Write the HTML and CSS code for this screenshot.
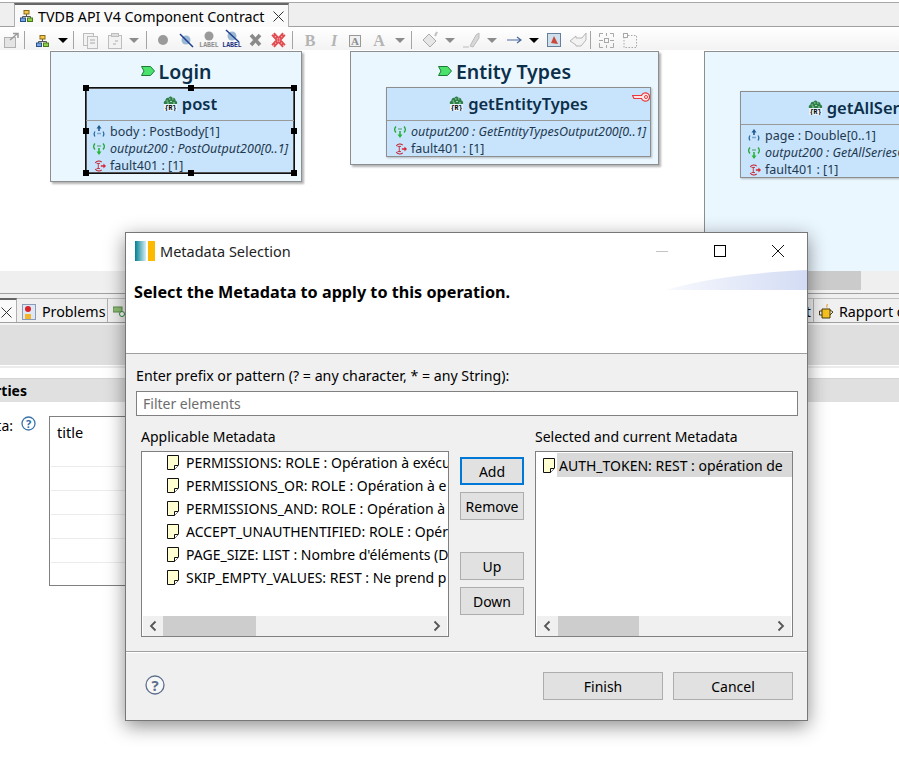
FILE: index.html
```html
<!DOCTYPE html>
<html lang="en">
<head>
  <meta charset="UTF-8" />
  <title>TVDB API V4 Component Contract</title>
  <link rel="stylesheet" href="styles.css">
</head>
<body>

  <svg class="defs" width="0" height="0">
    <defs>
      <linearGradient id="swoosh" x1="0" x2="1" y1="0" y2="0">
        <stop offset="0" stop-color="#f8f9fe"/>
        <stop offset="1" stop-color="#d3dcf4"/>
      </linearGradient>
    </defs>
    <symbol id="tag" viewBox="0 0 14 10">
      <path d="M.5.5H9.500L13.500 5 9.500 9.500H.5L3 5Z" fill="#4be26c" stroke="#1c7a36"/>
    </symbol>
    <symbol id="op" viewBox="0 0 15 15">
      <path d="M1.500 8.500C0 7 1 5 2.500 4.500 2.500 2.500 4 1.500 5.500 2 6.500 0 8.500 0 9.500 2 11 1.500 12.500 2.500 12.500 4.500 14 5 15 7 13.500 8.500Z" fill="#2f7f48"/>
      <path d="M3.500 5H5M6 3H7.500M9 3H10.500M4 7H6M7 5.500H9M10 7H12" stroke="#a4d6ae"/>
      <rect x="1" y="8" width="13" height="7" fill="#e6f3fb"/>
      <text x="7.500" y="14" class="op-r">{R}</text>
    </symbol>
    <symbol id="p-in" viewBox="0 0 12 13">
      <path d="M2 6.500A4.500 4.500 0 0 0 2 11.500M10 6.500A4.500 4.500 0 0 1 10 11.500" fill="none" stroke="#2b6ca3" stroke-width="1.300"/>
      <path d="M6 0L8.500 3.500H6.800V6H5.200V3.500H3.500Z" fill="#1f5a8e"/>
      <path d="M4.500 8.500H5.500M6.500 8.500H7.500" stroke="#2b6ca3" stroke-width="1.500"/>
    </symbol>
    <symbol id="p-out" viewBox="0 0 12 13">
      <path d="M2 1.500A4.500 4.500 0 0 0 2 7.500M10 1.500A4.500 4.500 0 0 1 10 7.500" fill="none" stroke="#27a838" stroke-width="1.300"/>
      <path d="M5.200 6H6.800V9.500H8.500L6 13 3.500 9.500H5.200Z" fill="#27b53a"/>
      <path d="M4.500 4H5.500M6.500 4H7.500" stroke="#1f8a30" stroke-width="1.500"/>
    </symbol>
    <symbol id="p-fault" viewBox="0 0 14 13">
      <path d="M1.500 3A4.800 4.800 0 0 1 9 2M1.500 10A4.800 4.800 0 0 0 9 11" fill="none" stroke="#c4202c" stroke-width="1.300"/>
      <path d="M3 3.500H7M3 9.500H7M5 3.500V9.500" stroke="#c4202c"/>
      <path d="M8 5.500H11V3.500L14 6.500 11 9.500V7.500H8Z" fill="#d8242f"/>
    </symbol>
    <symbol id="note" viewBox="0 0 12 15">
      <path d="M.5.5H11.500V10L7.500 14.500H.5Z" fill="#ffffd2" stroke="#111"/>
      <path d="M7.500 14.500V10.500H11" fill="#fff" stroke="#111"/>
    </symbol>
    <symbol id="sb-left" viewBox="0 0 8 12">
      <path d="M6.500 1.500L2 6 6.500 10.500" fill="none" stroke="#555" stroke-width="1.800"/>
    </symbol>
    <symbol id="sb-right" viewBox="0 0 8 12">
      <path d="M1.500 1.500L6 6 1.500 10.500" fill="none" stroke="#555" stroke-width="1.800"/>
    </symbol>
    <symbol id="tree" viewBox="0 0 13 12">
      <path d="M6.500 4V7M2.500 8V6.500H10.500V8" fill="none" stroke="#555"/>
      <rect x="4" y=".5" width="5" height="3.500" fill="#f5c64a" stroke="#8a6a14"/>
      <rect x=".5" y="8" width="5" height="3.500" fill="#7aa5dc" stroke="#28508c"/>
      <rect x="7.500" y="8" width="5" height="3.500" fill="#8ed04a" stroke="#4a7a18"/>
    </symbol>
  </svg>

  <div class="app">

    <div class="editor-tabs">
      <div class="editor-tab">
        <svg class="tab-icon" width="13" height="12"><use href="#tree"/></svg>
        <span>TVDB API V4 Component Contract</span>
        <svg class="tab-close" width="11" height="11" viewBox="0 0 11 11"><path d="M.5.5L10.500 10.500M10.500.5L.5 10.500" stroke="#333"/></svg>
      </div>
    </div>

    <div class="toolbar">
      <svg width="24" height="23" viewBox="0 0 24 23">
        <rect x="4.500" y="10.500" width="11" height="10" fill="#e4e4e4" stroke="#b0b0b0"/>
        <path d="M10 13L17 7M13 6.500H18V11" fill="none" stroke="#9a9a9a" stroke-width="1.500"/>
      </svg>
      <div class="tb-sep"></div>
      <svg width="48" height="23" viewBox="0 0 48 23">
        <use href="#tree" x="11" y="8" width="13" height="12"/>
        <path d="M33 11H43L38 16Z" fill="#000"/>
      </svg>
      <div class="tb-sep"></div>
      <svg width="72" height="23" viewBox="0 0 72 23">
        <g fill="#f2f2f2" stroke="#bdbdbd">
          <rect x="9.500" y="6.500" width="10" height="12"/>
          <rect x="13.500" y="9.500" width="10" height="12"/>
          <rect x="34.500" y="8.500" width="13" height="13"/>
          <rect x="37.500" y="6.500" width="7" height="3" fill="#ddd"/>
        </g>
        <path d="M16 13H21M16 16H21M41 14H44M39 17H42" stroke="#aaa"/>
        <path d="M55 11H65L60 16Z" fill="#8c8c8c"/>
      </svg>
      <div class="tb-sep"></div>
      <svg width="145" height="23" viewBox="0 0 145 23">
        <circle cx="16" cy="13" r="5" fill="#9a9a9a"/>
        <circle cx="39" cy="13" r="4.500" fill="#9ab7d4"/>
        <path d="M33 7L46 20" stroke="#1d3f8f" stroke-width="1.500"/>
        <circle cx="62" cy="9" r="4.500" fill="#9a9a9a"/>
        <text x="62" y="20" class="tb-label">LABEL</text>
        <circle cx="85" cy="9" r="4.500" fill="#9ab7d4"/>
        <path d="M79 3L92 15" stroke="#1d3f8f" stroke-width="1.500"/>
        <text x="85" y="20" class="tb-label dark">LABEL</text>
        <path d="M104 8L113 18M113 8L104 18" stroke="#8a8a8a" stroke-width="3.600"/>
        <path d="M126 7L137 19M137 7L126 19" stroke="#e04a50" stroke-width="4.400"/>
        <path d="M126 7L137 19M137 7L126 19" stroke="#f7b2b4" stroke-width="1.500" stroke-dasharray="1 2"/>
      </svg>
      <div class="tb-sep"></div>
      <svg width="118" height="23" viewBox="0 0 118 23">
        <text x="17" y="19" class="tb-b">B</text>
        <text x="41" y="19" class="tb-i">I</text>
        <rect x="56.500" y="8.500" width="11" height="11" fill="#f1f1f1" stroke="#999"/>
        <text x="62" y="18" class="tb-a small">A</text>
        <text x="86" y="19" class="tb-a">A</text>
        <path d="M102 11H112L107 16Z" fill="#8c8c8c"/>
      </svg>
      <div class="tb-sep"></div>
      <svg width="178" height="23" viewBox="0 0 178 23">
        <path d="M11 13L17 7 24 14 18 20Z" fill="#e6e6e6" stroke="#aaa"/>
        <path d="M23 9L25 5" stroke="#c0c0c0" stroke-width="2"/>
        <path d="M33 11H43L38 16Z" fill="#8c8c8c"/>
        <path d="M51 20H57M58 19L64 8 67 6 67 11 61 20Z" fill="#d8d8d8" stroke="#bcbcbc"/>
        <path d="M75 11H85L80 16Z" fill="#8c8c8c"/>
        <path d="M95 13H108M105 10L109 13 105 16" fill="none" stroke="#4a6a9e" stroke-width="1.200"/>
        <path d="M117 11H127L122 16Z" fill="#000"/>
        <rect x="135.500" y="6.500" width="13" height="13" fill="#cfe0ec" stroke="#667f9a"/>
        <path d="M139 16L142 9 146 17Z" fill="#c8483c"/>
        <path d="M158 14L164 9V11H170L174 6V13L169 19H164V18Z" fill="#f2f2f2" stroke="#b5b5b5"/>
      </svg>
      <div class="tb-sep"></div>
      <svg width="52" height="23" viewBox="0 0 52 23">
        <g fill="none" stroke="#a8a8a8">
          <path d="M8.500 10V6.500H12M19 6.500H22.500V10M8.500 16V20.500H12M19 20.500H22.500V16"/>
          <rect x="13.500" y="11.500" width="4" height="4"/>
          <path d="M15.500 6V9M15.500 18V21M8 13.500H12M19 13.500H23"/>
          <rect x="32.500" y="6.500" width="4" height="4"/>
          <path d="M37 8.500H45.500V20.500H33V11" stroke-dasharray="1.500 1.500"/>
        </g>
      </svg>
    </div>

    <div class="canvas">
      <div class="node node-login">
        <div class="node-title"><svg width="14" height="10"><use href="#tag"/></svg>Login</div>
        <div class="op op-post">
          <div class="op-title"><svg width="15" height="15"><use href="#op"/></svg>post</div>
          <div class="op-params">
            <div class="param"><svg width="12" height="13"><use href="#p-in"/></svg>body : PostBody[1]</div>
            <div class="param it"><svg width="12" height="13"><use href="#p-out"/></svg>output200 : PostOutput200[0..1]</div>
            <div class="param fault"><svg width="12" height="12"><use href="#p-fault"/></svg>fault401 : [1]</div>
          </div>
          <i class="handle h-tl"></i><i class="handle h-tc"></i><i class="handle h-tr"></i>
          <i class="handle h-ml"></i><i class="handle h-mr"></i>
          <i class="handle h-bl"></i><i class="handle h-bc"></i><i class="handle h-br"></i>
        </div>
      </div>

      <div class="node node-entity">
        <div class="node-title"><svg width="14" height="10"><use href="#tag"/></svg>Entity Types</div>
        <div class="op op-entity">
          <div class="op-title"><svg width="15" height="15"><use href="#op"/></svg>getEntityTypes</div>
          <svg class="key" width="18" height="10" viewBox="0 0 18 10">
            <path d="M.5 3.500H9.500A4.200 4.200 0 1 1 9.500 6.500H2Z" fill="#ffe5e5" stroke="#e8383c" stroke-width="1.200"/>
            <circle cx="14" cy="5" r="1.500" fill="#fff" stroke="#e8383c"/>
          </svg>
          <div class="op-params">
            <div class="param it"><svg width="12" height="13"><use href="#p-out"/></svg>output200 : GetEntityTypesOutput200[0..1]</div>
            <div class="param fault"><svg width="12" height="12"><use href="#p-fault"/></svg>fault401 : [1]</div>
          </div>
        </div>
      </div>

      <div class="node node-series">
        <div class="op op-series">
          <div class="op-title"><svg width="15" height="15"><use href="#op"/></svg>getAllSeries</div>
          <div class="op-params">
            <div class="param"><svg width="12" height="13"><use href="#p-in"/></svg>page : Double[0..1]</div>
            <div class="param it"><svg width="12" height="13"><use href="#p-out"/></svg>output200 : GetAllSeriesOutput200[0..1]</div>
            <div class="param fault"><svg width="12" height="12"><use href="#p-fault"/></svg>fault401 : [1]</div>
          </div>
        </div>
      </div>
    </div>

    <div class="canvas-scroll"><div class="canvas-track"></div></div>

    <div class="view-tabs">
      <div class="view-tab active">
        <svg width="11" height="11" viewBox="0 0 11 11"><path d="M.5.5L10.500 10.500M10.500.5L.5 10.500" stroke="#333"/></svg>
      </div>
      <div class="view-tab problems">
        <svg width="14" height="16" viewBox="0 0 14 16">
          <rect x=".5" y=".5" width="13" height="15" fill="#dfe7f2" stroke="#8a9cb8"/>
          <circle cx="6" cy="5" r="3" fill="#d8232a"/>
          <rect x="3" y="10" width="6" height="5" fill="#f3b52c"/>
        </svg>
        <span>Problems</span>
      </div>
      <div class="view-tab hidden-tab">
        <svg width="12" height="11" viewBox="0 0 12 11">
          <rect x="0" y="1" width="9" height="5" fill="#8fbf76" stroke="#5f8a4a"/>
          <circle cx="9" cy="8" r="2.500" fill="#fff" stroke="#2f8a3a"/>
        </svg>
      </div>
      <div class="view-spacer"></div>
      <div class="view-tab clipped"><span>t</span></div>
      <div class="view-tab rapport">
        <svg width="15" height="15" viewBox="0 0 15 15">
          <path d="M8 0C9 1 7 2 8 3.500" fill="none" stroke="#e08a1e"/>
          <path d="M3 5H11V14H3Z" fill="#f5c21f" stroke="#4a3a10"/>
          <path d="M3 7H.5V11H3M11 6L14 8 11 11" fill="none" stroke="#4a3a10"/>
        </svg>
        <span>Rapport de</span>
      </div>
    </div>

    <div class="props">
      <div class="props-band"></div>
      <div class="props-heading"><b>Properties</b></div>
      <div class="props-row">
        <div class="props-label"><span>Metadata:</span></div>
        <svg class="help-small" width="15" height="15" viewBox="0 0 15 15">
          <circle cx="7.500" cy="7.500" r="6.500" fill="#fff" stroke="#3a74a8" stroke-width="1.300"/>
          <text x="7.500" y="11.500" class="help-q">?</text>
        </svg>
        <div class="props-table">
          <div class="props-cell first">title</div>
          <div class="props-cell"></div>
          <div class="props-cell"></div>
          <div class="props-cell"></div>
          <div class="props-cell"></div>
          <div class="props-cell"></div>
        </div>
      </div>
    </div>
  </div>

  <div class="dialog">
    <div class="dlg-top">
      <div class="dlg-titlebar">
        <div class="dlg-logo"><i class="logo-teal"></i><i class="logo-yellow"></i></div>
        <span class="dlg-title">Metadata Selection</span>
        <div class="dlg-controls">
          <svg width="58" height="14" viewBox="0 0 58 14"><path d="M23 7.500H35" stroke="#c4c4c4"/></svg>
          <svg width="58" height="14" viewBox="0 0 58 14"><rect x="23.500" y="1.500" width="11" height="11" fill="none" stroke="#000"/></svg>
          <svg width="58" height="14" viewBox="0 0 58 14"><path d="M23 1L35 13M35 1L23 13" stroke="#111"/></svg>
        </div>
      </div>
      <div class="dlg-message">Select the Metadata to apply to this operation.</div>
      <svg class="dlg-swoosh" width="141" height="20" viewBox="0 0 141 20">
        <path d="M0 20C40 8 95 2 141 0V20Z" fill="url(#swoosh)"/>
      </svg>
    </div>

    <div class="dlg-body">
      <label class="filter-label">Enter prefix or pattern (? = any character, * = any String):</label>
      <input class="filter" type="text" placeholder="Filter elements" />

      <div class="panes">
        <div class="pane">
          <div class="pane-label">Applicable Metadata</div>
          <div class="list">
            <div class="list-items">
              <div class="item"><svg width="12" height="15"><use href="#note"/></svg>PERMISSIONS: ROLE : Opération à exécu</div>
              <div class="item"><svg width="12" height="15"><use href="#note"/></svg>PERMISSIONS_OR: ROLE : Opération à e</div>
              <div class="item"><svg width="12" height="15"><use href="#note"/></svg>PERMISSIONS_AND: ROLE : Opération à</div>
              <div class="item"><svg width="12" height="15"><use href="#note"/></svg>ACCEPT_UNAUTHENTIFIED: ROLE : Opér</div>
              <div class="item"><svg width="12" height="15"><use href="#note"/></svg>PAGE_SIZE: LIST : Nombre d'éléments (D</div>
              <div class="item"><svg width="12" height="15"><use href="#note"/></svg>SKIP_EMPTY_VALUES: REST : Ne prend p</div>
            </div>
            <div class="hscroll">
              <svg width="8" height="12"><use href="#sb-left"/></svg>
              <div class="thumb thumb-left"></div>
              <svg width="8" height="12"><use href="#sb-right"/></svg>
            </div>
          </div>
        </div>

        <div class="pane-buttons">
          <button class="btn focus">Add</button>
          <button class="btn">Remove</button>
          <button class="btn up">Up</button>
          <button class="btn">Down</button>
        </div>

        <div class="pane pane-right">
          <div class="pane-label">Selected and current Metadata</div>
          <div class="list">
            <div class="list-items">
              <div class="item selected"><svg width="12" height="15"><use href="#note"/></svg><span>AUTH_TOKEN: REST : opération de</span></div>
            </div>
            <div class="hscroll">
              <svg width="8" height="12"><use href="#sb-left"/></svg>
              <div class="thumb thumb-right"></div>
              <svg width="8" height="12"><use href="#sb-right"/></svg>
            </div>
          </div>
        </div>
      </div>
    </div>

    <div class="dlg-footer">
      <svg width="20" height="20" viewBox="0 0 20 20">
        <circle cx="10" cy="10" r="9" fill="#f7f7f7" stroke="#5d708c" stroke-width="1.300"/>
        <text x="10" y="15.500" class="help-q big">?</text>
      </svg>
      <div class="footer-buttons">
        <button class="btn wide">Finish</button>
        <button class="btn wide">Cancel</button>
      </div>
    </div>
  </div>

</body>
</html>
```

FILE: styles.css
```css
* {
  box-sizing: border-box;
}
html, body {
  margin: 0;
  height: 757px;
  overflow: hidden;
}
body {
  font-family: "Noto Sans", "Open Sans", sans-serif;
  font-size: 14px;
  color: #000;
  background: #fff;
  position: relative;
}
.defs {
  position: absolute;
}
svg {
  flex: none;
  display: block;
}
.app {
  display: flex;
  flex-direction: column;
  height: 757px;
}

/* editor tabs and toolbar */
.editor-tabs {
  flex: none;
  height: 25px;
  margin-top: 2px;
  padding-left: 14px;
  background: #efefef;
  border-top: 1px solid #a8a8a8;
  border-bottom: 1px solid #a0a0a0;
}
.editor-tab {
  width: 275px;
  height: 24px;
  display: flex;
  align-items: center;
  background: #fafafa;
  border: 1px solid #b0b0b0;
  border-top: 2px solid #666;
  border-bottom: 0;
  padding-left: 5px;
  font-size: 14.25px;
  white-space: nowrap;
}
.tab-icon {
  margin-right: 5px;
}
.tab-close {
  margin-left: 8px;
}
.toolbar {
  flex: none;
  height: 23px;
  display: flex;
  background: linear-gradient(#fff, #f3f3f3);
  overflow: hidden;
}
.tb-sep {
  flex: none;
  width: 1px;
  height: 18px;
  margin-top: 4px;
  background: #a4a4a4;
}
.tb-label {
  font: bold 6.5px "Liberation Mono", monospace;
  text-anchor: middle;
  fill: #8c8c8c;
}
.tb-label.dark {
  fill: #1d2f7f;
}
.tb-b, .tb-a, .tb-i {
  font-family: "Liberation Serif", serif;
  font-size: 16px;
  font-weight: bold;
  text-anchor: middle;
  fill: #b4b4b4;
}
.tb-i {
  font-style: italic;
}
.tb-a.small {
  font-size: 11px;
  fill: #8c8c8c;
}

/* diagram */
.canvas {
  flex: none;
  height: 221px;
  position: relative;
  overflow: hidden;
  background: #fff;
}
.node {
  position: absolute;
  top: 1px;
  background: #ebf7ff;
  border: 1px solid #8e8e8e;
  box-shadow: 2px 2px 2px rgba(0, 0, 0, 0.3);
}
.node-login {
  left: 50px;
  width: 252px;
  height: 131px;
  padding-left: 34px;
}
.node-entity {
  left: 350px;
  width: 309px;
  height: 114px;
  padding-left: 35px;
}
.node-series {
  left: 704px;
  width: 320px;
  height: 230px;
  padding: 39px 0 0 35px;
}
.node-title {
  height: 35px;
  display: flex;
  align-items: center;
  justify-content: center;
  gap: 4px;
  font-size: 19.5px;
  font-weight: 600;
  color: #0c2f4a;
  padding-top: 3px;
}
.node-login .node-title {
  margin-left: -34px;
  width: 250px;
}
.node-entity .node-title {
  margin-left: -35px;
  width: 307px;
}
.op {
  position: relative;
  background: #c8e4fc;
  border: 1px solid #8e8e8e;
  box-shadow: 1px 1px 2px rgba(0, 0, 0, 0.25);
}
.op-post {
  width: 210px;
  height: 87px;
  border: 1px solid #111;
  box-shadow: inset 0 0 0 1px #555;
}
.op-entity {
  width: 265px;
  height: 70px;
}
.op-series {
  width: 250px;
  height: 87px;
}
.op-title {
  height: 33px;
  display: flex;
  align-items: center;
  justify-content: center;
  gap: 4px;
  padding-bottom: 2px;
  font-size: 16.5px;
  font-weight: 600;
  color: #0c2f4a;
  border-bottom: 1px solid #9a9a9a;
}
.op-params {
  padding: 2px 0 0 7px;
}
.param {
  height: 17px;
  display: flex;
  align-items: center;
  gap: 5px;
  font-size: 12.5px;
  color: #1f3950;
  white-space: nowrap;
}
.param.it {
  font-style: italic;
}
.param.fault svg {
  margin-left: 1px;
  margin-right: -1px;
}
.op-r {
  font: bold 6.5px "Liberation Mono", monospace;
  text-anchor: middle;
  fill: #000;
}
.key {
  position: absolute;
  top: 4px;
  right: 0;
}
.handle {
  position: absolute;
  width: 6px;
  height: 6px;
  background: #000;
}
.h-tl { top: -3px; left: -3px; }
.h-tc { top: -3px; left: 102px; }
.h-tr { top: -3px; right: -3px; }
.h-ml { top: 40px; left: -3px; }
.h-mr { top: 40px; right: -3px; }
.h-bl { bottom: -3px; left: -3px; }
.h-bc { bottom: -3px; left: 102px; }
.h-br { bottom: -3px; right: -3px; }

.canvas-scroll {
  flex: none;
  height: 22px;
  padding-bottom: 3px;
  background: #f2f2f2;
}
.canvas-track {
  height: 19px;
  background: linear-gradient(90deg, #efefef 300px, #cbcbcb 300px, #cbcbcb 861px, #efefef 861px);
}

/* lower views */
.view-tabs {
  flex: none;
  height: 30px;
  display: flex;
  align-items: flex-end;
  background: #f0f0f0;
  border-top: 1px solid #a0a0a0;
  border-bottom: 1px solid #a0a0a0;
  font-size: 14.25px;
}
.view-tab {
  height: 24px;
  display: flex;
  align-items: center;
  padding-top: 2px;
  border-top: 1px solid #c0c0c0;
  border-right: 1px solid #b0b0b0;
  white-space: nowrap;
}
.view-tab.active {
  width: 17px;
  padding-left: 1px;
  background: #fafafa;
  border-top: 2px solid #666;
}
.problems {
  width: 91px;
  gap: 6px;
  padding-left: 5px;
}
.hidden-tab {
  width: 40px;
  padding-left: 5px;
  border-right: 0;
}
.view-spacer {
  flex: 1;
}
.clipped {
  padding-right: 2px;
}
.rapport {
  width: 85px;
  overflow: hidden;
  gap: 5px;
  padding-left: 5px;
  border-right: 0;
}
.props {
  flex: 1;
  position: relative;
  background: #fff;
}
.props-band {
  height: 42px;
  background: #dfdfdf;
  border-top: 2px solid #f4f4f4;
  margin-bottom: 13px;
  box-shadow: 0 1px 0 #fff, 0 3px 0 #ececec;
}
.props-heading {
  height: 24px;
  display: flex;
  justify-content: flex-end;
  align-items: center;
  overflow: hidden;
  background: #e0e0e0;
  border-top: 1px solid #d4d4d4;
  padding-right: 872px;
  white-space: nowrap;
  font-size: 14px;
}
.props-row {
  display: flex;
  margin-top: 14px;
}
.props-label {
  width: 13px;
  height: 20px;
  display: flex;
  justify-content: flex-end;
  overflow: hidden;
  white-space: nowrap;
}
.help-small {
  margin: 0 14px 0 8px;
}
.help-q {
  font-size: 11px;
  font-weight: bold;
  text-anchor: middle;
  fill: #2f6ba3;
}
.help-q.big {
  font-size: 15px;
  fill: #5d708c;
}
.props-table {
  width: 600px;
  height: 170px;
  margin-left: -1px;
  border: 1px solid #808080;
  padding-left: 1px;
}
.props-cell {
  height: 24px;
  border-bottom: 1px solid #ececec;
  padding-left: 6px;
  font-size: 14.5px;
}
.props-cell.first {
  height: 50px;
  padding-top: 5px;
}
.props-cell:last-child {
  border-bottom: 0;
}

/* dialog */
.dialog {
  position: absolute;
  left: 125px;
  top: 232px;
  width: 683px;
  height: 489px;
  display: flex;
  flex-direction: column;
  background: #f0f0f0;
  border: 1px solid #777;
  box-shadow: 0 5px 18px rgba(0, 0, 0, 0.45);
}
.dlg-top {
  position: relative;
  height: 121px;
  flex: none;
  background: #fff;
  border-bottom: 1px solid #a0a0a0;
}
.dlg-titlebar {
  height: 36px;
  display: flex;
  align-items: center;
  padding-left: 9px;
}
.dlg-logo {
  width: 20px;
  height: 20px;
  display: flex;
  justify-content: space-between;
  margin-right: 5px;
}
.logo-teal {
  width: 11px;
  background: linear-gradient(90deg, #007f93, #d8eef2);
}
.logo-yellow {
  width: 7px;
  background: #fdb900;
}
.dlg-title {
  font-size: 14.5px;
  color: #222;
}
.dlg-controls {
  margin-left: auto;
  display: flex;
}
.dlg-message {
  margin-top: 12px;
  padding-left: 8px;
  font-size: 16.2px;
  font-weight: bold;
  line-height: 22px;
}
.dlg-swoosh {
  position: absolute;
  right: 0;
  top: 37px;
}
.dlg-body {
  flex: none;
  height: 298px;
  padding: 12px 9px 0 10px;
  border-bottom: 1px solid #a0a0a0;
  box-shadow: 0 1px 0 #fff;
}
.filter-label {
  display: block;
  line-height: 20px;
  font-size: 14.2px;
}
.filter {
  display: block;
  width: 100%;
  height: 25px;
  margin-top: 5px;
  padding: 0 6px;
  background: #fff;
  border: 1px solid #808080;
  border-radius: 0;
  outline: 0;
  font: 14px "Noto Sans", sans-serif;
}
.filter::placeholder {
  color: #6d6d6d;
  opacity: 1;
}
.panes {
  display: flex;
  margin: 11px 0 0 5px;
}
.pane {
  width: 308px;
}
.pane-right {
  width: 258px;
}
.pane-label {
  height: 24px;
  line-height: 20px;
}
.list {
  height: 186px;
  display: flex;
  flex-direction: column;
  background: #fff;
  border: 1px solid #808080;
}
.list-items {
  flex: 1;
  overflow: hidden;
}
.item {
  height: 23px;
  display: flex;
  align-items: center;
  padding-left: 25px;
  gap: 7px;
  white-space: nowrap;
  margin-top: -1px;
  margin-bottom: 1px;
}
.pane-right .list-items {
  padding: 1px 0 0 7px;
}
.pane-right .item {
  margin: 0;
  padding-left: 0;
  gap: 2px;
  height: 24px;
}
.pane-right .item span {
  flex: 1;
  line-height: 24px;
  padding: 1px 0 0 2px;
  height: 24px;
  background: #d9d9d9;
}
.hscroll {
  flex: none;
  height: 20px;
  margin: 0 1px;
  display: flex;
  align-items: center;
  padding: 0 6px;
  background: #f0f0f0;
}
.thumb {
  height: 100%;
  background: #cdcdcd;
}
.thumb-left {
  width: 93px;
  margin: 0 auto 0 6px;
}
.thumb-right {
  width: 81px;
  margin: 0 auto 0 7px;
}
.pane-buttons {
  width: 86px;
  padding: 30px 11px 0;
  display: flex;
  flex-direction: column;
  gap: 7px;
}
.btn {
  height: 28px;
  width: 64px;
  padding: 0;
  background: #e1e1e1;
  border: 1px solid #adadad;
  border-radius: 0;
  font: 14px "Noto Sans", sans-serif;
  color: #000;
}
.btn.focus {
  border: 2px solid #0078d7;
}
.btn.up {
  margin-top: 25px;
}
.btn.wide {
  width: 120px;
}
.dlg-footer {
  flex: 1;
  display: flex;
  align-items: flex-start;
  justify-content: space-between;
  padding: 20px 14px 0 19px;
}
.dlg-footer > svg {
  margin-top: 3px;
}
.footer-buttons {
  display: flex;
  gap: 10px;
}
```
